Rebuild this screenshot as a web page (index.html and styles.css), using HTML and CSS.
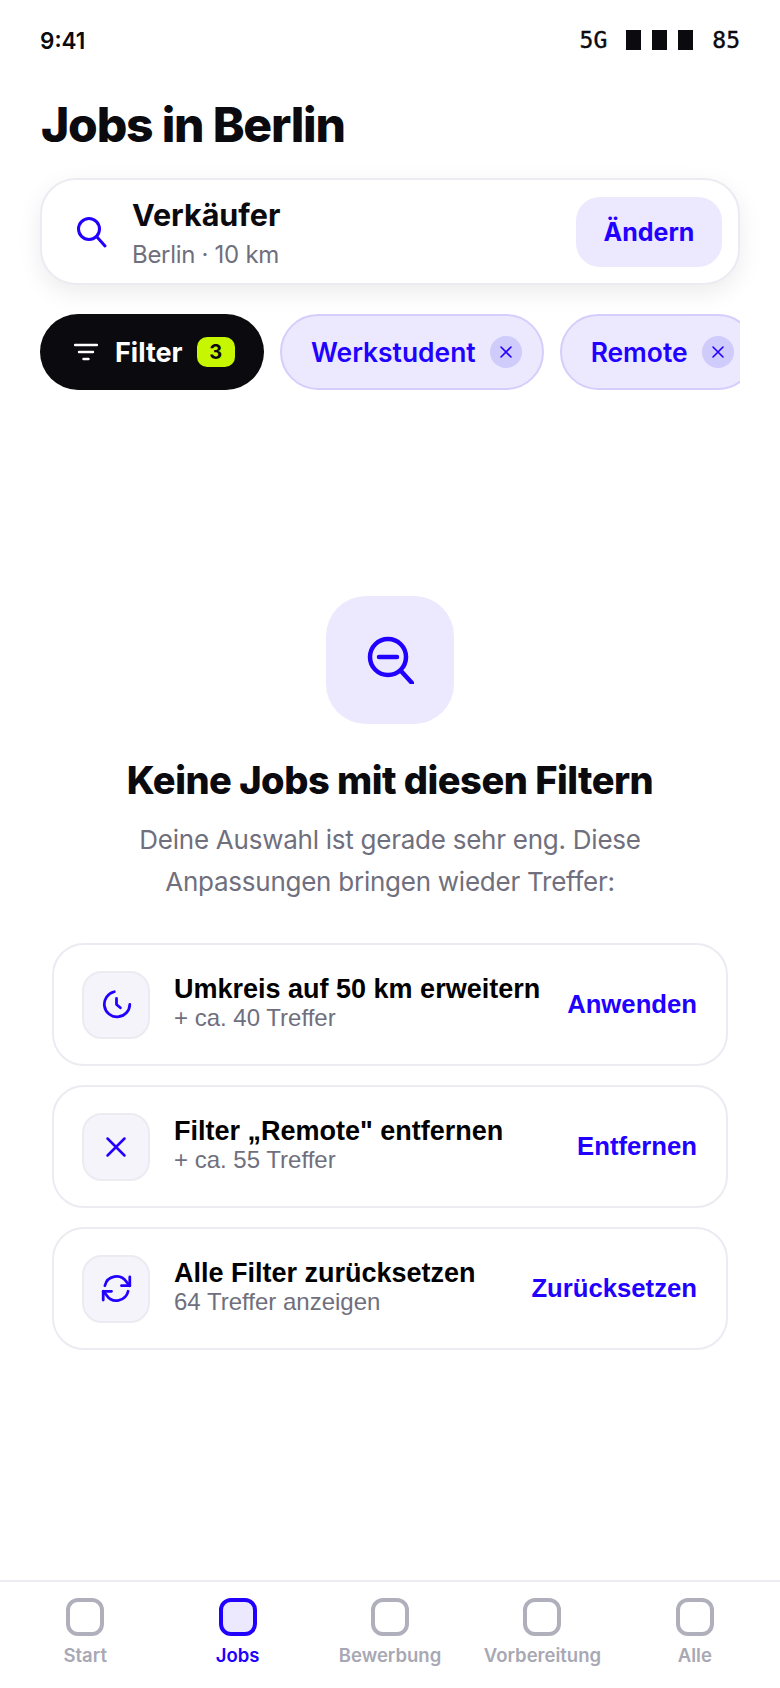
FILE: index.html
```html
<!DOCTYPE html>
<html lang="de">
<head>
    <meta charset="UTF-8">
    <meta name="viewport" content="width=device-width, initial-scale=1.0">
    <title>Jobs in Berlin</title>
    <link rel="stylesheet" href="styles.css">
</head>
<body>
    <!-- Statusleiste -->
    <div class="status">
        <span class="time">9:41</span>
        <div class="status-right">
            <span>5G</span>
            <div class="bars"><i></i><i></i><i></i></div>
            <span>85</span>
        </div>
    </div>

    <h1>Jobs in Berlin</h1>

    <!-- Suche -->
    <div class="search">
        <svg class="search-icon" viewBox="0 0 32 32" fill="none" stroke="currentColor" stroke-width="3" stroke-linecap="round">
            <circle cx="13" cy="13" r="10.5"/>
            <path d="M21 21l8 9"/>
        </svg>
        <div class="search-text">
            <div class="search-title">Verkäufer</div>
            <div class="search-sub">Berlin · 10 km</div>
        </div>
        <button class="change">Ändern</button>
    </div>

    <!-- Filter -->
    <div class="chips">
        <button class="chip-dark">
            <svg class="filter-icon" viewBox="0 0 24 18" fill="none" stroke="currentColor" stroke-width="2.4" stroke-linecap="round">
                <path d="M1 2h22M5 9h14M9.500 16h5"/>
            </svg>
            Filter
            <span class="badge">3</span>
        </button>
        <div class="chip">
            Werkstudent
            <span class="chip-x"><svg viewBox="0 0 14 14" fill="none" stroke="currentColor" stroke-width="1.600" stroke-linecap="round"><path d="M2 2l10 10M12 2L2 12"/></svg></span>
        </div>
        <div class="chip">
            Remote
            <span class="chip-x"><svg viewBox="0 0 14 14" fill="none" stroke="currentColor" stroke-width="1.600" stroke-linecap="round"><path d="M2 2l10 10M12 2L2 12"/></svg></span>
        </div>
    </div>

    <!-- Leerer Zustand -->
    <div class="empty">
        <div class="empty-icon">
            <svg viewBox="0 0 48 48" fill="none" stroke="currentColor" stroke-width="4.500" stroke-linecap="round">
                <circle cx="22" cy="21" r="18"/>
                <path d="M13 21h18M35 35l11 12"/>
            </svg>
        </div>
        <h2>Keine Jobs mit diesen Filtern</h2>
        <p>Deine Auswahl ist gerade sehr eng. Diese<br>Anpassungen bringen wieder Treffer:</p>
    </div>

    <div class="hints">
        <div class="hint">
            <div class="hint-icon">
                <svg class="wide" viewBox="0 0 28 28" fill="none" stroke="currentColor" stroke-width="2.500" stroke-linecap="round" stroke-linejoin="round">
                    <path d="M12 2.500A11.500 11.500 0 1 0 26 14"/>
                    <path d="M14 8.500v5.500l3.500 3"/>
                </svg>
            </div>
            <div class="hint-text">
                <div class="hint-title">Umkreis auf 50 km erweitern</div>
                <div class="hint-sub">+ ca. 40 Treffer</div>
            </div>
            <span class="hint-action">Anwenden</span>
        </div>
        <div class="hint">
            <div class="hint-icon">
                <svg viewBox="0 0 28 28" fill="none" stroke="currentColor" stroke-width="2.500" stroke-linecap="round">
                    <path d="M5.500 5.500l17 17M22.500 5.500l-17 17"/>
                </svg>
            </div>
            <div class="hint-text">
                <div class="hint-title">Filter „Remote" entfernen</div>
                <div class="hint-sub">+ ca. 55 Treffer</div>
            </div>
            <span class="hint-action">Entfernen</span>
        </div>
        <div class="hint">
            <div class="hint-icon">
                <svg class="wide" viewBox="0 0 28 28" fill="none" stroke="currentColor" stroke-width="2.500" stroke-linecap="round" stroke-linejoin="round">
                    <path d="M3.500 11.500A10.800 10.800 0 0 1 23 8l3 3.500"/>
                    <path d="M26 3.500v8h-7.500"/>
                    <path d="M24.500 16.500A10.800 10.800 0 0 1 5 20l-3-3.500"/>
                    <path d="M2 24.500v-8h7.500"/>
                </svg>
            </div>
            <div class="hint-text">
                <div class="hint-title">Alle Filter zurücksetzen</div>
                <div class="hint-sub">64 Treffer anzeigen</div>
            </div>
            <span class="hint-action">Zurücksetzen</span>
        </div>
    </div>

    <!-- Navigation -->
    <nav class="tabs">
        <div class="tab"><span class="tab-icon"></span>Start</div>
        <div class="tab active"><span class="tab-icon"></span>Jobs</div>
        <div class="tab"><span class="tab-icon"></span>Bewerbung</div>
        <div class="tab"><span class="tab-icon"></span>Vorbereitung</div>
        <div class="tab"><span class="tab-icon"></span>Alle</div>
    </nav>
</body>
</html>
```

FILE: styles.css
```css
* {
    box-sizing: border-box;
}

body {
    margin: 0;
    height: 1688px;
    display: flex;
    flex-direction: column;
    background: #ffffff;
    color: #0a0a0f;
    font-family: Inter, "Liberation Sans", sans-serif;
    overflow: hidden;
}

button {
    border: none;
    font-family: inherit;
}

.status {
    display: flex;
    justify-content: space-between;
    align-items: center;
    padding: 26px 40px 0;
    height: 54px;
    font-size: 22.500px;
    font-weight: 600;
}

.status-right {
    display: flex;
    align-items: center;
    gap: 19px;
    font-family: "DejaVu Sans Mono", monospace;
    font-size: 23px;
    font-weight: 400;
    -webkit-text-stroke: 0.4px #0a0a0f;
}

.bars {
    display: flex;
    gap: 11px;
}

.bars i {
    display: block;
    width: 15px;
    height: 20px;
    background: #0a0a0f;
}

h1 {
    margin: 44px 0 0 41px;
    font-size: 48px;
    line-height: 54px;
    font-weight: 800;
    letter-spacing: -1.2px;
}

.search {
    display: flex;
    align-items: center;
    margin: 26px 40px 0;
    height: 107px;
    padding: 0 16px 0 34px;
    background: #ffffff;
    border: 2px solid #ebebf2;
    border-radius: 36px;
    box-shadow: 0 8px 24px rgba(10, 10, 20, 0.08);
}

.search-icon {
    width: 32px;
    height: 32px;
    color: #2200ff;
    flex: none;
}

.search-text {
    flex: 1;
    margin-left: 24px;
    padding-top: 5px;
}

.search-title {
    font-size: 30.500px;
    line-height: 38px;
    font-weight: 700;
}

.search-sub {
    margin-top: 4px;
    font-size: 24px;
    line-height: 34px;
    color: #6f6f7d;
    letter-spacing: -0.3px;
}

.change {
    width: 146px;
    height: 70px;
    border-radius: 24px;
    background: #ece9ff;
    color: #2200ff;
    font-size: 25px;
    font-weight: 700;
}

.chips {
    display: flex;
    gap: 16px;
    margin: 29px 40px 0;
    overflow: hidden;
}

.chip-dark {
    flex: none;
    display: flex;
    align-items: center;
    width: 224px;
    height: 76px;
    padding: 0 0 0 34px;
    border-radius: 38px;
    background: #0a0a0f;
    color: #ffffff;
    font-size: 27px;
    font-weight: 700;
}

.filter-icon {
    width: 24px;
    height: 18px;
    margin-right: 17px;
}

.badge {
    margin-left: 14px;
    width: 38px;
    height: 30px;
    border-radius: 10px;
    background: #c6f600;
    color: #0a0a0f;
    font-size: 20px;
    line-height: 30px;
    text-align: center;
}

.chip {
    flex: none;
    display: flex;
    align-items: center;
    gap: 14px;
    height: 76px;
    padding: 0 20px 0 29px;
    border: 2px solid #d4cefc;
    border-radius: 38px;
    background: #ece9ff;
    color: #2200ff;
    font-size: 26.400px;
    font-weight: 600;
}

.chip-x {
    display: flex;
    align-items: center;
    justify-content: center;
    width: 32px;
    height: 32px;
    border-radius: 50%;
    background: #cfcbfb;
}

.chip-x svg {
    width: 14px;
    height: 14px;
}

.empty {
    display: flex;
    flex-direction: column;
    align-items: center;
    margin-top: 206px;
}

.empty-icon {
    display: flex;
    align-items: center;
    justify-content: center;
    width: 128px;
    height: 128px;
    border-radius: 40px;
    background: #ece9ff;
    color: #2200ff;
}

.empty-icon svg {
    width: 48px;
    height: 48px;
}

h2 {
    margin: 32px 0 0;
    font-size: 38px;
    line-height: 48px;
    font-weight: 800;
    letter-spacing: -0.5px;
}

.empty p {
    margin: 15px 0 0;
    font-size: 26px;
    line-height: 42px;
    text-align: center;
    color: #6f6f7d;
    letter-spacing: -0.25px;
}

.hints {
    display: flex;
    flex-direction: column;
    gap: 19px;
    margin: 40px 52px 0 52px;
}

.hint {
    display: flex;
    align-items: center;
    height: 123px;
    padding: 0 29px 0 28px;
    border: 2px solid #ebebf2;
    border-radius: 32px;
    font-family: "Liberation Sans", Arial, sans-serif;
}

.hint-icon {
    flex: none;
    display: flex;
    align-items: center;
    justify-content: center;
    width: 68px;
    height: 68px;
    border: 2px solid #ebebf2;
    border-radius: 20px;
    background: #f5f4fb;
    color: #2200ff;
}

.hint-icon svg {
    width: 28px;
    height: 28px;
}

.hint-icon svg.wide {
    width: 31px;
    height: 31px;
}

.hint-text {
    flex: 1;
    margin-left: 24px;
    padding-bottom: 4px;
}

.hint-title {
    font-size: 27px;
    line-height: 30px;
    font-weight: 700;
    color: #000000;
}

.hint-sub {
    font-size: 24px;
    line-height: 28px;
    color: #6f6f7d;
}

.hint-action {
    font-size: 25.700px;
    font-weight: 700;
    color: #2200ff;
}

.tabs {
    display: flex;
    margin-top: auto;
    height: 108px;
    padding: 16px 9px 0;
    border-top: 2px solid #ebebf2;
}

.tab {
    flex: 1;
    display: flex;
    flex-direction: column;
    align-items: center;
    gap: 6px;
    font-size: 18.500px;
    line-height: 26px;
    font-weight: 600;
    color: #a8a8b4;
}

.tab-icon {
    width: 38px;
    height: 38px;
    border: 4px solid #b0b0bc;
    border-radius: 12px;
}

.tab.active {
    color: #2200ff;
}

.tab.active .tab-icon {
    border-color: #2200ff;
    background: #ece9ff;
}
```
